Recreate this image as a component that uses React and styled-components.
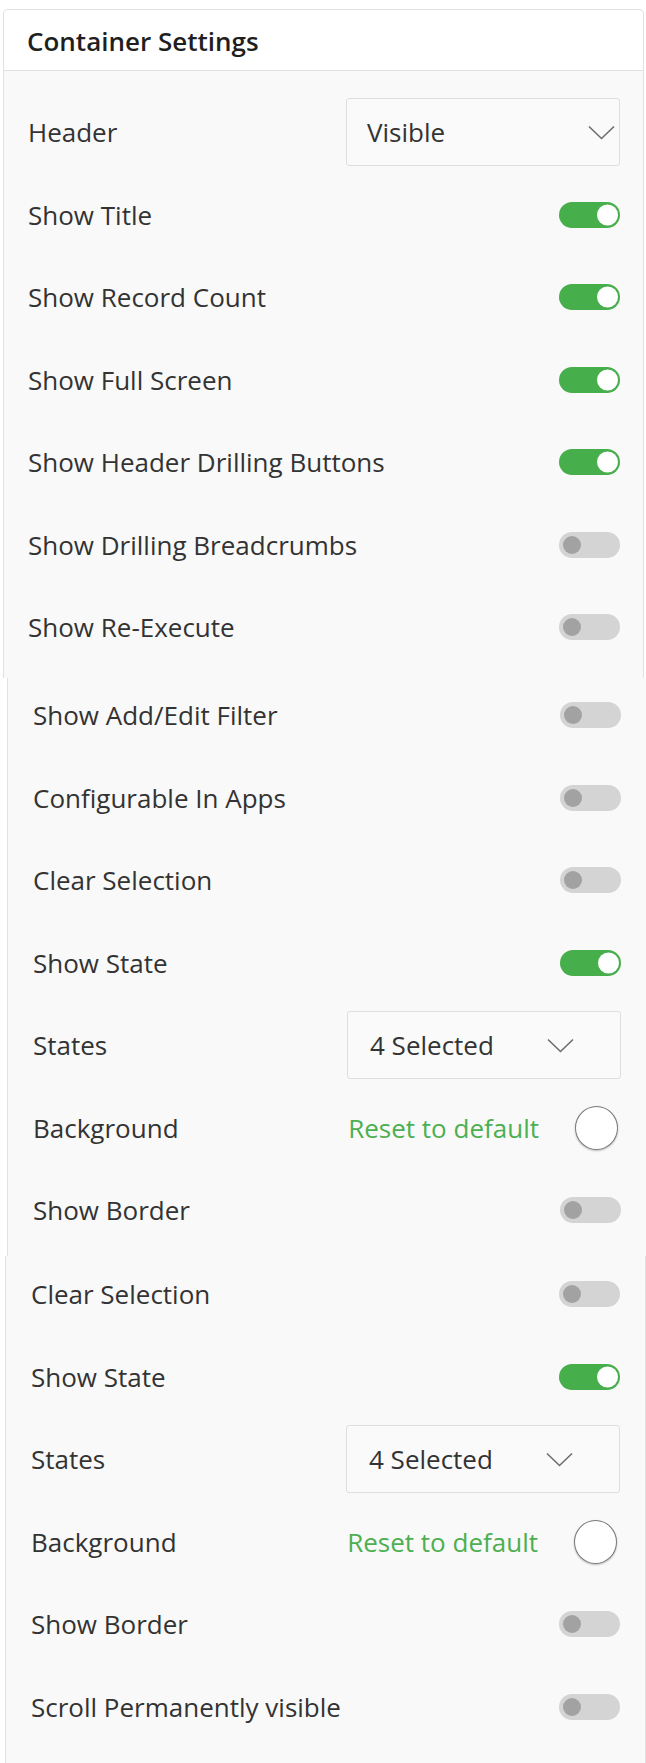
import React from "react";
import styled, { createGlobalStyle } from "styled-components";

const Global = createGlobalStyle`
  html, body { margin: 0; padding: 0; background: #ffffff; }
  body { font-family: "Open Sans", "Noto Sans", sans-serif; color: #333; }
  * { box-sizing: border-box; }
`;

const Page = styled.div`
  width: 646px;
  height: 1763px;
  overflow: hidden;
  padding-top: 9px;
  display: flex;
  flex-direction: column;
`;

const Card = styled.section`
  margin-left: ${(p) => p.$left}px;
  width: ${(p) => p.$width}px;
  background: #f9f9f9;
  border-left: 1px solid #e2e2e2;
  border-right: ${(p) => (p.$noRight ? "none" : "1px solid #e2e2e2")};
  border-top: ${(p) => (p.$top ? "1px solid #e2e2e2" : "none")};
  border-radius: ${(p) => (p.$top ? "5px 5px 0 0" : "0")};
  height: ${(p) => p.$height}px;
  overflow: hidden;
  flex-shrink: 0;
`;

const CardHeader = styled.header`
  height: 61px;
  background: #ffffff;
  border-bottom: 1px solid #e2e2e2;
  border-radius: 5px 5px 0 0;
  display: flex;
  align-items: center;
  padding-left: 23px;
  padding-top: 1px;
  font-size: 26px;
  font-weight: 600;
  color: #1f1f1f;
`;

const RowList = styled.div`
  display: flex;
  flex-direction: column;
  margin-top: ${(p) => p.$offset}px;
  padding-left: ${(p) => p.$padL}px;
  padding-right: ${(p) => p.$padR}px;
`;

const Row = styled.div`
  height: 82.5px;
  flex-shrink: 0;
  display: flex;
  align-items: center;
  justify-content: space-between;
`;

const Label = styled.span`
  font-size: 26px;
  color: #333;
  white-space: nowrap;
`;

const Track = styled.div`
  width: 61px;
  height: 26px;
  border-radius: 13px;
  background: ${(p) => (p.$on ? "#47ae4c" : "#d4d4d4")};
  position: relative;
  flex-shrink: 0;
`;

const Knob = styled.div`
  position: absolute;
  top: 50%;
  transform: translateY(-50%);
  border-radius: 50%;
  width: ${(p) => (p.$on ? 21 : 18)}px;
  height: ${(p) => (p.$on ? 21 : 18)}px;
  background: ${(p) => (p.$on ? "#ffffff" : "#a2a2a2")};
  ${(p) => (p.$on ? "right: 2px;" : "left: 4px;")}
`;

const Select = styled.div`
  width: 274px;
  height: 68px;
  border: 1px solid #dedede;
  border-radius: 3px;
  background: #fafafa;
  display: flex;
  align-items: center;
  justify-content: space-between;
  padding-left: ${(p) => (p.$multi ? 22 : 20)}px;
  padding-right: ${(p) => (p.$multi ? 46 : 4)}px;
  font-size: 26px;
  color: #333;
`;

const ColorGroup = styled.div`
  display: flex;
  align-items: center;
  gap: 36px;
  padding-right: 3px;
`;

const ResetLink = styled.span`
  font-size: 26px;
  color: #4caf50;
  white-space: nowrap;
`;

const Swatch = styled.div`
  width: 43px;
  height: 44px;
  border-radius: 50%;
  background: #ffffff;
  border: 1.5px solid #7a7a7a;
  box-shadow: 0 1px 2px rgba(0, 0, 0, 0.25);
`;

const Chevron = () => (
  <svg width="27" height="15" viewBox="0 0 27 15" fill="none">
    <path d="M1 1.5 L13.5 13.5 L26 1.5" stroke="#6d6d6d" strokeWidth="1.6" />
  </svg>
);

const Toggle = ({ on }) => (
  <Track $on={on}>
    <Knob $on={on} />
  </Track>
);

const renderRow = (r, i) => {
  let control;
  if (r.type === "toggle") control = <Toggle on={r.on} />;
  else if (r.type === "select")
    control = (
      <Select $multi={r.multi}>
        <span>{r.value}</span>
        <Chevron />
      </Select>
    );
  else
    control = (
      <ColorGroup>
        <ResetLink>Reset to default</ResetLink>
        <Swatch />
      </ColorGroup>
    );
  return (
    <Row key={i}>
      <Label>{r.label}</Label>
      {control}
    </Row>
  );
};

const sec1 = [
  { label: "Header", type: "select", value: "Visible" },
  { label: "Show Title", type: "toggle", on: true },
  { label: "Show Record Count", type: "toggle", on: true },
  { label: "Show Full Screen", type: "toggle", on: true },
  { label: "Show Header Drilling Buttons", type: "toggle", on: true },
  { label: "Show Drilling Breadcrumbs", type: "toggle", on: false },
  { label: "Show Re-Execute", type: "toggle", on: false },
];

const sec2 = [
  { label: "Show Add/Edit Filter", type: "toggle", on: false },
  { label: "Configurable In Apps", type: "toggle", on: false },
  { label: "Clear Selection", type: "toggle", on: false },
  { label: "Show State", type: "toggle", on: true },
  { label: "States", type: "select", value: "4 Selected", multi: true },
  { label: "Background", type: "color" },
  { label: "Show Border", type: "toggle", on: false },
];

const sec3 = [
  { label: "Clear Selection", type: "toggle", on: false },
  { label: "Show State", type: "toggle", on: true },
  { label: "States", type: "select", value: "4 Selected", multi: true },
  { label: "Background", type: "color" },
  { label: "Show Border", type: "toggle", on: false },
  { label: "Scroll Permanently visible", type: "toggle", on: false },
];

export default function App() {
  return (
    <>
      <Global />
      <Page>
        <Card $left={3} $width={641} $top $height={669}>
          <CardHeader>Container Settings</CardHeader>
          <RowList $offset={20} $padL={24} $padR={23}>
            {sec1.map(renderRow)}
          </RowList>
        </Card>
        <Card $left={7} $width={639} $noRight $height={578}>
          <RowList $offset={-4} $padL={25} $padR={25}>
            {sec2.map(renderRow)}
          </RowList>
        </Card>
        <Card $left={5} $width={641} $height={520}>
          <RowList $offset={-3} $padL={25} $padR={25}>
            {sec3.map(renderRow)}
          </RowList>
        </Card>
      </Page>
    </>
  );
}
